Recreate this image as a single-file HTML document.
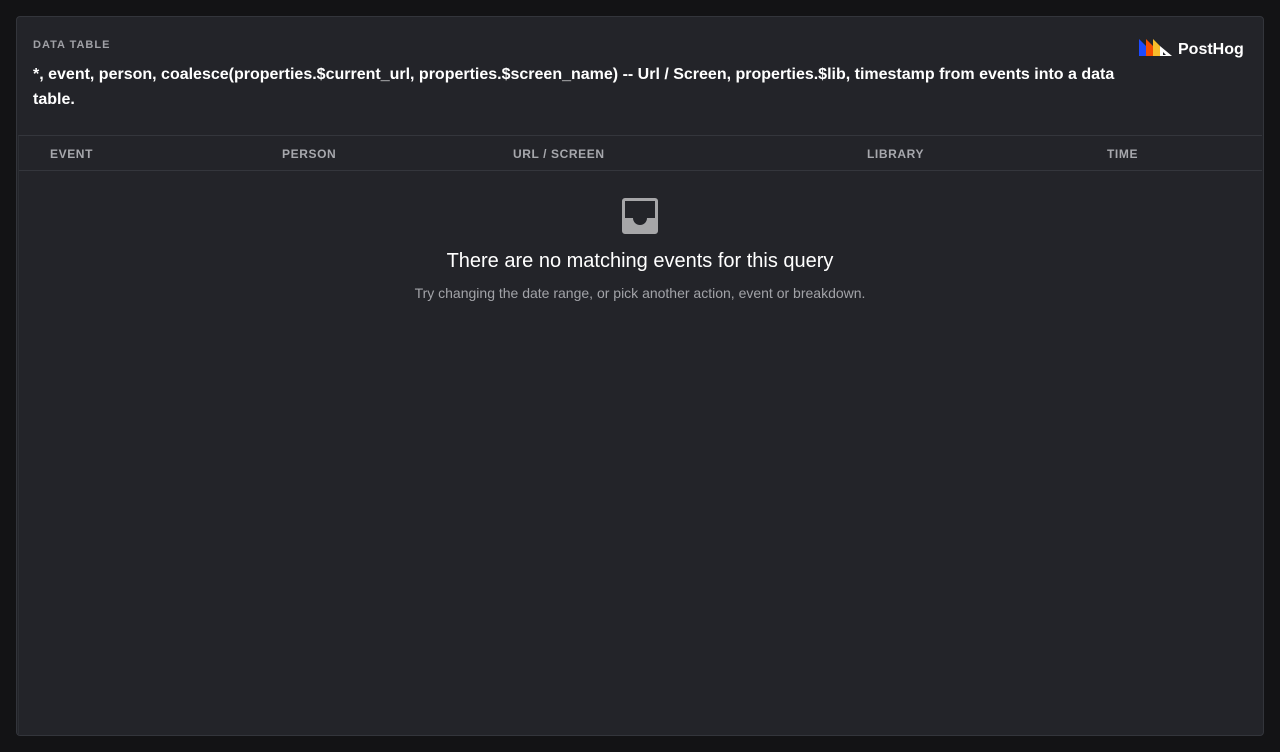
<!DOCTYPE html>
<html><head><style>
body{margin:0;background:#131315;width:1280px;height:752px;overflow:hidden;font-family:"Liberation Sans",sans-serif;}
.card{position:absolute;left:16px;top:16px;width:1248px;height:720px;background:#232429;border:1px solid #33353b;border-radius:4px;box-sizing:border-box;}
.lbl{position:absolute;left:16px;top:22px;font-size:11px;font-weight:bold;letter-spacing:1px;color:#a0a1a6;}
.q{position:absolute;left:16px;top:45px;width:1090px;font-size:16px;font-weight:bold;color:#fff;line-height:25px;}
.tbl{position:absolute;left:1px;top:118px;right:1px;bottom:1px;border-top:1px solid #34363c;border-left:1px solid #2c2e33;}
.hd{height:34px;border-bottom:1px solid #34363c;position:relative;font-size:12px;font-weight:bold;letter-spacing:.6px;color:#a7a8ad;}
.hd span{position:absolute;top:11px;}
.logo{position:absolute;left:1121px;top:21px;}
.t1{position:absolute;left:0;right:0;top:233px;text-align:center;color:#fff;font-size:20px;}
.t2{position:absolute;left:0;right:0;top:268px;text-align:center;color:#a2a3a8;font-size:14px;}
</style></head><body>
<div class="card">
<div class="lbl">DATA TABLE</div>
<div class="q">*, event, person, coalesce(properties.$current_url, properties.$screen_name) -- Url / Screen, properties.$lib, timestamp from events into a data table.</div>
<svg class="logo" width="110" height="20" viewBox="0 0 110 20">
<polygon points="1,1 8,8 8,18 1,18" fill="#1d4aff"/>
<polygon points="8,1 15,8 15,18 8,18 8,8" fill="#f54e00"/>
<polygon points="15,1 22,8 22,18 15,18" fill="#f9bd2b"/>
<polygon points="22,8 34,18 22,18" fill="#fff"/>
<polygon points="25,14 28,17 25,17" fill="#232429"/>
<text x="40" y="16" fill="#fff" font-family="Liberation Sans" font-weight="bold" font-size="16">PostHog</text>
</svg>
<div class="tbl">
<div class="hd"><span style="left:31px">EVENT</span><span style="left:263px">PERSON</span><span style="left:494px">URL / SCREEN</span><span style="left:848px">LIBRARY</span><span style="left:1088px">TIME</span></div>
</div>
<svg style="position:absolute;left:605px;top:181px" width="36" height="36" viewBox="0 0 36 36"><path d="M3 0h30a3 3 0 0 1 3 3v30a3 3 0 0 1-3 3H3a3 3 0 0 1-3-3V3a3 3 0 0 1 3-3zM3 3v17h8a7 7 0 0 0 14 0h8V3z" fill="#a6a6a8" fill-rule="evenodd"/></svg>
<div class="t1">There are no matching events for this query</div>
<div class="t2">Try changing the date range, or pick another action, event or breakdown.</div>
</div>
</body></html>
